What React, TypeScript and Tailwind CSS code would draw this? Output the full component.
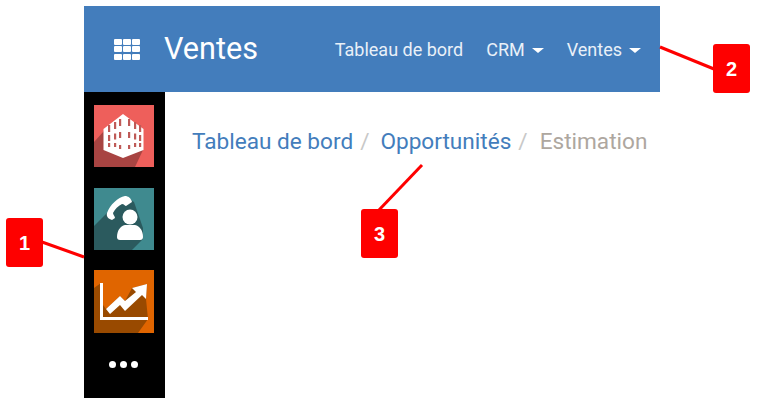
import React from 'react';

const Caret = () => (
  <span className="ml-[7px] inline-block h-0 w-0 border-x-[6px] border-t-[5px] border-x-transparent border-t-white align-middle" />
);

const Badge: React.FC<{ label: string; className: string }> = ({ label, className }) => (
  <div
    className={`absolute flex h-[49px] w-[37px] items-center justify-center rounded-[3px] bg-[#fe0000] font-['Liberation_Sans',sans-serif] text-[20px] font-bold text-white ${className}`}
  >
    {label}
  </div>
);

const AppGrid = () => (
  <div className="grid w-[26px] grid-cols-3 gap-[1.5px]">
    {Array.from({ length: 9 }).map((_, i) => (
      <div key={i} className="h-[6px] rounded-[1px] bg-white" />
    ))}
  </div>
);

const windowColumns = [14, 20, 25, 34, 40, 45];

const BuildingTile = () => (
  <svg width="60" height="62" viewBox="0 0 60 62" className="block">
    <rect width="60" height="62" fill="#ee5f5b" />
    <path d="M0 37 L10 26 L49 45 L41 62 L0 62 Z" fill="#a84442" />
    <path d="M29 9 L49.5 24 L49.5 45 L29 53 L9.5 45 L9.5 24 Z" fill="#fff" />
    <g fill="#bf5a57">
      {windowColumns.map((x, i) => {
        const rise = [6, 3, 0, 0, 3, 6][i];
        return (
          <g key={x}>
            <rect x={x} y={14 + rise} width="2.2" height="7" />
            <rect x={x} y={27 + rise / 2} width="2.2" height="6" />
            <rect x={x} y={38 + (i === 2 || i === 3 ? 2 : 0)} width="2.2" height="4" />
          </g>
        );
      })}
    </g>
  </svg>
);

const PhoneTile = () => (
  <svg width="60" height="62" viewBox="0 0 60 62" className="block">
    <rect width="60" height="62" fill="#3f8a8f" />
    <path d="M0 38 L16 22 L34 10 L40 14 L49 40 L49 51 L38 62 L0 62 Z" fill="#2b5a5e" />
    <path d="M31 8 C24 9 16 17 13 25 C12 29 15 31 18 32 L21 30 C21 28 19 27 19 25 C21 21 24 18 28 16 C30 16 31 18 32 18 L38 14 C37 10 34 8 31 8 Z" fill="#fff" />
    <circle cx="36" cy="29" r="7.5" fill="#fff" />
    <path d="M23 49 C23 43 26 38 31 37 L41 37 C46 38 49 43 49 49 C49 51 48 52 46 52 L26 52 C24 52 23 51 23 49 Z" fill="#fff" />
  </svg>
);

const ChartTile = () => (
  <svg width="60" height="63" viewBox="0 0 60 63" className="block">
    <rect width="60" height="63" fill="#e06500" />
    <path d="M0 18 L7 13 L9 15 L9 35 L12 39 L26 26 L31 31 L38 18 L53 14 L52 29 L54 49 L44 63 L0 63 Z" fill="#994a00" />
    <path d="M7.5 13 L7.5 48.5 L54 48.5" fill="none" stroke="#fff" strokeWidth="3" />
    <path d="M12 39 L26 26 L31 31 L42 22 L38 18 L53 14 L52 29 L48 25 L31 41 L26 35 L16 44 Z" fill="#fff" />
  </svg>
);

const Leader: React.FC<{ x1: number; y1: number; x2: number; y2: number }> = (p) => (
  <line {...p} stroke="#fe0000" strokeWidth="3" />
);

export default function App() {
  return (
    <div className="relative h-[404px] w-[757px] overflow-hidden bg-white pl-[84px] pt-[6px] font-['Roboto',sans-serif]">
      <div className="w-[576px]">
        {/* Top bar */}
        <header className="flex h-[86px] items-center bg-[#437dbc] text-white">
          <div className="ml-[30px]">
            <AppGrid />
          </div>
          <span className="ml-[24px] text-[30.6px] leading-none">Ventes</span>
          <nav className="ml-auto mr-[19px] flex items-center gap-[23px] whitespace-nowrap text-[18px] text-[#e9f0f8]">
            <span>Tableau de bord</span>
            <span>
              CRM
              <Caret />
            </span>
            <span>
              Ventes
              <Caret />
            </span>
          </nav>
        </header>

        <div className="flex">
          {/* App launcher */}
          <aside className="flex h-[306px] w-[81px] shrink-0 flex-col items-start bg-black pl-[10px] pt-[13px]">
            <BuildingTile />
            <div className="mt-[21px]">
              <PhoneTile />
            </div>
            <div className="mt-[20px]">
              <ChartTile />
            </div>
            <div className="ml-[15px] mt-[28px] flex gap-[4px]">
              <div className="h-[7px] w-[7px] rounded-full bg-white" />
              <div className="h-[7px] w-[7px] rounded-full bg-white" />
              <div className="h-[7px] w-[7px] rounded-full bg-white" />
            </div>
          </aside>

          {/* Breadcrumb */}
          <nav className="flex h-fit items-center whitespace-nowrap pl-[27px] pt-[33px] text-[22.6px] leading-[33px]">
            <span className="text-[#437dbc]">Tableau de bord</span>
            <span className="ml-[7px] text-[#c8c8c8]">/</span>
            <span className="ml-[11px] text-[#437dbc]">Opportunités</span>
            <span className="ml-[7px] text-[#c8c8c8]">/</span>
            <span className="ml-[12px] text-[#aea79f]">Estimation</span>
          </nav>
        </div>
      </div>

      {/* Callouts */}
      <svg width="757" height="404" className="pointer-events-none absolute left-0 top-0">
        <Leader x1={42} y1={242} x2={84} y2={257} />
        <Leader x1={660} y1={47} x2={714} y2={69} />
        <Leader x1={422} y1={165} x2={379} y2={210} />
      </svg>
      <Badge label="1" className="left-[6px] top-[218px]" />
      <Badge label="2" className="left-[713px] top-[44px]" />
      <Badge label="3" className="left-[361px] top-[209px]" />
    </div>
  );
}
